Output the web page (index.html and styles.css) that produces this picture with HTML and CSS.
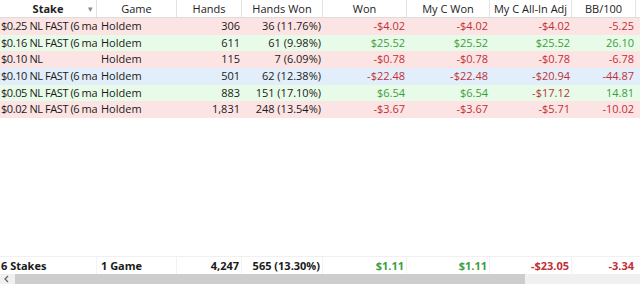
FILE: index.html
```html
<!DOCTYPE html>
<html>
<head>
<meta charset="utf-8">
<link rel="stylesheet" href="styles.css">
</head>
<body>
<div class="view">
  <div class="row head">
    <div class="c hc stake"><b>Stake</b><span class="arrow">&#9662;</span></div>
    <div class="c hc">Game</div>
    <div class="c hc">Hands</div>
    <div class="c hc">Hands Won</div>
    <div class="c hc">Won</div>
    <div class="c hc">My C Won</div>
    <div class="c hc">My C All-In Adj</div>
    <div class="c hc">BB/100</div>
    <div class="c hc last"></div>
  </div>
  <div class="row pink">
    <div class="c l st">$0.25 NL FAST (6 ma</div><div class="c l gm">Holdem</div><div class="c r">306</div><div class="c r">36 (11.76%)</div>
    <div class="c r neg">-$4.02</div><div class="c r neg">-$4.02</div><div class="c r neg">-$4.02</div><div class="c r neg">-5.25</div>
  </div>
  <div class="row green">
    <div class="c l st">$0.16 NL FAST (6 ma</div><div class="c l gm">Holdem</div><div class="c r">611</div><div class="c r">61 (9.98%)</div>
    <div class="c r pos">$25.52</div><div class="c r pos">$25.52</div><div class="c r pos">$25.52</div><div class="c r pos">26.10</div>
  </div>
  <div class="row pink">
    <div class="c l st">$0.10 NL</div><div class="c l gm">Holdem</div><div class="c r">115</div><div class="c r">7 (6.09%)</div>
    <div class="c r neg">-$0.78</div><div class="c r neg">-$0.78</div><div class="c r neg">-$0.78</div><div class="c r neg">-6.78</div>
  </div>
  <div class="row blue">
    <div class="c l st">$0.10 NL FAST (6 ma</div><div class="c l gm">Holdem</div><div class="c r">501</div><div class="c r">62 (12.38%)</div>
    <div class="c r neg">-$22.48</div><div class="c r neg">-$22.48</div><div class="c r neg">-$20.94</div><div class="c r neg">-44.87</div>
  </div>
  <div class="row green">
    <div class="c l st">$0.05 NL FAST (6 ma</div><div class="c l gm">Holdem</div><div class="c r">883</div><div class="c r">151 (17.10%)</div>
    <div class="c r pos">$6.54</div><div class="c r pos">$6.54</div><div class="c r neg">-$17.12</div><div class="c r pos">14.81</div>
  </div>
  <div class="row pink">
    <div class="c l st">$0.02 NL FAST (6 ma</div><div class="c l gm">Holdem</div><div class="c r">1,831</div><div class="c r">248 (13.54%)</div>
    <div class="c r neg">-$3.67</div><div class="c r neg">-$3.67</div><div class="c r neg">-$5.71</div><div class="c r neg">-10.02</div>
  </div>
  <div class="row foot">
    <div class="c l">6 Stakes</div><div class="c l gm">1 Game</div><div class="c r">4,247</div><div class="c r">565 (13.30%)</div>
    <div class="c r pos">$1.11</div><div class="c r pos">$1.11</div><div class="c r neg">-$23.05</div><div class="c r neg">-3.34</div>
  </div>
  <div class="hscroll">
    <div class="sbtn"><svg width="15" height="10" viewBox="0 0 15 10"><path d="M8 2 L5 5 L8 8" fill="none" stroke="#606060" stroke-width="1.2"/></svg></div>
    <div class="thumb"></div>
  </div>
</div>
</body>
</html>
```
FILE: styles.css
```css
html, body {
  margin: 0;
  padding: 0;
  background: #ffffff;
}
.view {
  width: 640px;
  height: 284px;
  display: flex;
  flex-direction: column;
  overflow: hidden;
  font-family: "Open Sans", "Noto Sans", sans-serif;
  font-size: 11px;
  color: #1a1a1a;
}
.row {
  display: grid;
  grid-template-columns: 97px 80px 65px 81px 84px 83px 82px 64px 4px;
  height: 16.67px;
  line-height: 16.67px;
}
.c {
  overflow: hidden;
  white-space: nowrap;
}
.l { padding-left: 1px; }
.gm { padding-left: 4px; }
.st { letter-spacing: -0.42px; }
.r { text-align: right; padding-right: 2px; }
.head {
  height: 18px;
  line-height: 17px;
  border-bottom: 1px solid #dcdcdc;
  box-sizing: border-box;
  background: #ffffff;
}
.hc {
  text-align: center;
  border-right: 1px solid #e3e3e3;
  color: #222;
}
.hc.last { border-right: none; }
.stake {
  position: relative;
}
.stake b { font-weight: 700; }
.arrow {
  position: absolute;
  left: 88px;
  top: 0;
  font-size: 9px;
  color: #8a8a8a;
}
.pink { background: #fde4e4; }
.green { background: #e8fae8; }
.blue { background: #e2effa; }
.neg { color: #c22f36; }
.pos { color: #3d9e3d; }
.foot {
  margin-top: auto;
  height: 18px;
  line-height: 18px;
  font-weight: 700;
  border-top: 1px solid #f0f0f0;
  box-sizing: border-box;
}
.foot .c { border-right: 1px solid #f2f2f2; }
.foot .c:last-child { border-right: none; }
.hscroll {
  height: 10px;
  display: flex;
  background: #f0f0f0;
}
.sbtn {
  width: 15px;
  height: 10px;
  display: flex;
}
.thumb {
  width: 510px;
  background: #cdcdcd;
}
```
